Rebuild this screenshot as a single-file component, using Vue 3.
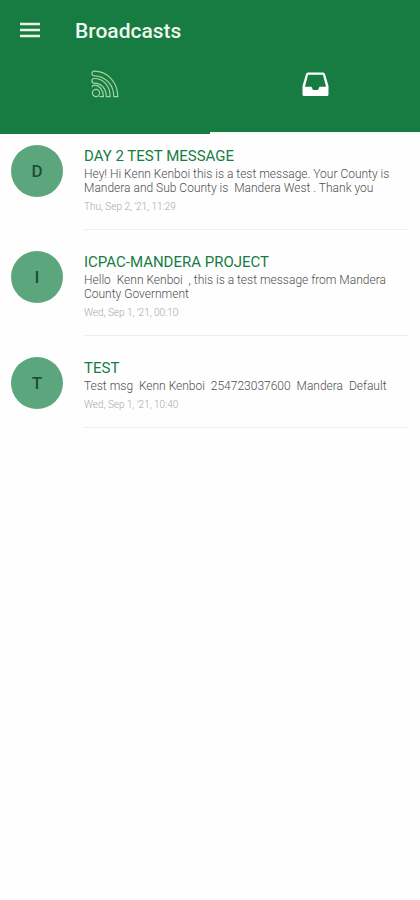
<script setup>
import { ref } from 'vue'

const activeTab = ref('inbox')

const messages = [
  {
    id: 1,
    title: 'DAY 2 TEST MESSAGE',
    body: 'Hey! Hi Kenn Kenboi this is a test message. Your County is Mandera and Sub County is  Mandera West . Thank you',
    date: "Thu, Sep 2, '21, 11:29",
  },
  {
    id: 2,
    title: 'ICPAC-MANDERA PROJECT',
    body: 'Hello  Kenn Kenboi  , this is a test message from Mandera County Government',
    date: "Wed, Sep 1, '21, 00:10",
  },
  {
    id: 3,
    title: 'TEST',
    body: 'Test msg  Kenn Kenboi  254723037600  Mandera  Default',
    date: "Wed, Sep 1, '21, 10:40",
  },
]
</script>

<template>
  <div class="screen">
    <header class="header">
      <div class="toolbar">
        <button class="menu" type="button" aria-label="Open menu">
          <svg width="20" height="16" viewBox="0 0 20 16" aria-hidden="true">
            <path d="M0 .8h20v2.400H0zM0 6.800h20v2.400H0zM0 12.800h20v2.400H0z" fill="#e8f3e6" />
          </svg>
        </button>
        <h1 class="heading">Broadcasts</h1>
      </div>
      <nav class="tabs" role="tablist">
        <button
          class="tab"
          :class="{ active: activeTab === 'feed' }"
          type="button"
          role="tab"
          aria-label="Feed"
          :aria-selected="activeTab === 'feed'"
          @click="activeTab = 'feed'"
        >
          <svg width="28" height="28" viewBox="0 0 28 28" fill="none" stroke="#a3d5a0" stroke-width="1.2" aria-hidden="true">
            <circle cx="5" cy="23" r="3.600" />
            <path d="M3.200 1.200C16 1.200 26.800 12 26.800 26.600H22.800C22.800 14.500 14 5.800 3.200 5.800a2.300 2.300 0 0 1 0-4.600z" />
            <path d="M3.200 8.500c9.500 0 15.900 7.600 15.900 18.100h-3.800c0-8-4.900-13.500-12.100-13.500a2.300 2.300 0 0 1 0-4.600z" />
            <path d="M1.400 17.200c-.4-1.200.6-2 1.800-2 5.200 0 9.200 4.800 9.200 11.400H8.400" />
          </svg>
        </button>
        <button
          class="tab"
          :class="{ active: activeTab === 'inbox' }"
          type="button"
          role="tab"
          aria-label="Inbox"
          :aria-selected="activeTab === 'inbox'"
          @click="activeTab = 'inbox'"
        >
          <svg width="28" height="28" viewBox="0 0 28 28" aria-hidden="true">
            <path
              d="M7 2.500h15q1.500 0 2 1.500l3.500 12v8.500q0 1.500-1.500 1.500H3q-1.500 0-1.500-1.500V16L5 4q.5-1.500 2-1.500zM7 4.800L4 16.800h6.500l1.500 3.200h5l1.500-3.200H25L22 4.800z"
              fill="#fff"
              fill-rule="evenodd"
            />
          </svg>
        </button>
      </nav>
    </header>

    <main class="list">
      <article v-for="message in messages" :key="message.id" class="row">
        <div class="avatar" aria-hidden="true">{{ message.title[0] }}</div>
        <div class="content">
          <h2 class="title">{{ message.title }}</h2>
          <p class="body">{{ message.body }}</p>
          <p class="date">{{ message.date }}</p>
        </div>
      </article>
    </main>
  </div>
</template>

<style>
body {
  background: #fefefe;
}
</style>

<style scoped>
.screen {
  font-family: Roboto, "Liberation Sans", sans-serif;
}

.header {
  background: #177c41;
}

.toolbar {
  display: flex;
  align-items: center;
  gap: 35px;
  height: 60px;
  padding: 0 20px;
}

.menu {
  display: flex;
  padding: 0;
  border: 0;
  background: none;
}

.heading {
  margin: 0;
  padding-top: 2px;
  color: #f0f7ee;
  font-size: 21px;
  font-weight: 500;
  line-height: 24px;
}

.tabs {
  display: flex;
}

.tab {
  display: flex;
  flex: 1;
  justify-content: center;
  height: 74px;
  padding: 10px 0 0;
  border: 0;
  border-bottom: 2px solid transparent;
  background: none;
}

.tab.active {
  border-bottom-color: #f5faf6;
}

.list {
  display: flex;
  flex-direction: column;
  gap: 21px;
  padding: 11px;
}

.row {
  display: flex;
  gap: 21px;
}

.avatar {
  display: flex;
  flex: none;
  align-items: center;
  justify-content: center;
  width: 52px;
  height: 52px;
  border-radius: 50%;
  background: #5ca67d;
  color: #1c4f33;
  font-size: 17px;
  font-weight: 500;
}

.content {
  flex: 1;
  min-width: 0;
  padding: 2px 0 15px;
  border-bottom: 1px solid #e2f2ef;
}

.title {
  margin: 0 0 2px;
  color: #177c41;
  font-size: 15px;
  font-weight: 400;
  line-height: 18px;
}

.body {
  margin: 0 0 5px;
  color: #505050;
  font-size: 12px;
  font-weight: 300;
  line-height: 14px;
  white-space: pre-wrap;
}

.date {
  margin: 0;
  color: #a8a8a8;
  font-size: 10px;
  font-weight: 300;
  line-height: 14px;
}
</style>
